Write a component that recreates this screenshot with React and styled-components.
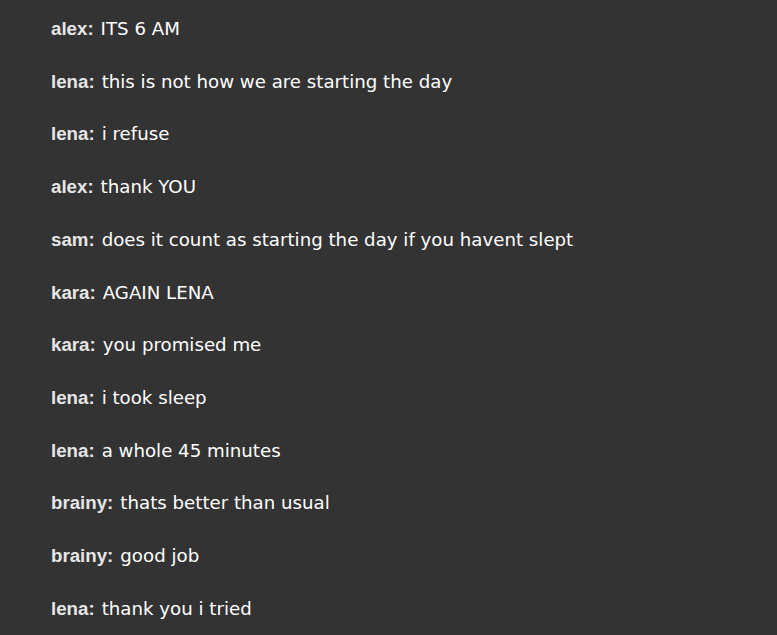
import React from "react";
import styled, { createGlobalStyle } from "styled-components";

const Global = createGlobalStyle`
  html, body { margin: 0; padding: 0; background: #333333; }
  body { font-family: "DejaVu Sans", Verdana, sans-serif; }
`;

const Log = styled.div`
  display: flex;
  flex-direction: column;
  padding: 15px 0 0 51px;
`;

const Line = styled.div`
  height: 52.73px;
  display: flex;
  align-items: baseline;
  font-size: 18.2px;
  line-height: 27px;
  color: #ffffff;
  white-space: nowrap;
`;

const Name = styled.span`
  font-family: "Liberation Sans", Arial, sans-serif;
  font-weight: bold;
  font-size: 18.7px;
  color: #e6e6e6;
  margin-right: 7px;
`;

const Msg = styled.span``;

const messages = [
  ["alex", "ITS 6 AM"],
  ["lena", "this is not how we are starting the day"],
  ["lena", "i refuse"],
  ["alex", "thank YOU"],
  ["sam", "does it count as starting the day if you havent slept"],
  ["kara", "AGAIN LENA"],
  ["kara", "you promised me"],
  ["lena", "i took sleep"],
  ["lena", "a whole 45 minutes"],
  ["brainy", "thats better than usual"],
  ["brainy", "good job"],
  ["lena", "thank you i tried"],
];

export default function App() {
  return (
    <>
      <Global />
      <Log>
        {messages.map(([n, m], i) => (
          <Line key={i}>
            <Name>{n}:</Name>
            <Msg>{m}</Msg>
          </Line>
        ))}
      </Log>
    </>
  );
}
